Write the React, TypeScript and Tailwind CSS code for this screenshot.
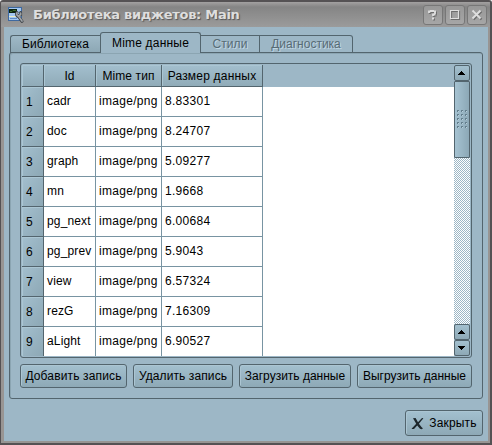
import React from "react";

const rows = [
  ["cadr", "8.83301"],
  ["doc", "8.24707"],
  ["graph", "5.09277"],
  ["mn", "1.9668"],
  ["pg_next", "6.00684"],
  ["pg_prev", "5.9043"],
  ["view", "6.57324"],
  ["rezG", "7.16309"],
  ["aLight", "6.90527"],
];

const raised = "border border-[#53656e] bg-linear-to-b from-[#a3c0cf] to-[#8ea9b6]";

function AppIcon() {
  return (
    <svg width="16" height="16" viewBox="0 0 16 16">
      <rect width="14" height="14" fill="#3f69a0" />
      <rect x="1" y="1" width="12" height="12" fill="#a4c8f2" />
      <rect x="1" y="2" width="8" height="4" fill="#0d2411" />
      <path d="M2 4.5h2l1-1h3" stroke="#3e6b2d" fill="none" />
      <path d="M1 9.5h8" stroke="#e9ecc4" />
      <path d="M2 11.5h7" stroke="#5f8cc4" />
      <path d="M9 5.5c-1 2 0 4 1.8 4.3L14 14.3M12.6 5.5v2.3l-1.6.6" fill="none" stroke="#3b4045" strokeWidth="3" strokeLinecap="round" />
      <path d="M9 5.8c-.6 1.8.2 3.2 1.8 3.6L14 14M12.6 6v1.8l-1.6.8" fill="none" stroke="#9fa4a8" strokeWidth="1.7" strokeLinecap="round" />
    </svg>
  );
}

function TitleButton({ kind }: { kind: "help" | "max" | "close" }) {
  return (
    <button className="flex h-5 w-5 items-center justify-center rounded-[3px] border border-[#777] bg-linear-to-b from-[#989898] to-[#a6a6a6]">
      <svg width="18" height="18" viewBox="0 0 18 18" fill="none">
        {[1, 0].map((o) => (
          <g key={o} transform={`translate(${o} ${o})`} stroke={o ? "#6c6c6c" : "#dedede"} strokeWidth="2">
            {kind === "help" && <path d="M5 7V5.5h1.5M6 5h4M10 5.5h2M11 5v3M11.5 8.5h-3M9 8v2M8 12.5h2" strokeWidth="1.8" />}
            {kind === "max" && <path d="M4.5 4.5h8v8h-8z" strokeWidth="1.2" />}
            {kind === "close" && <path d="M4.5 4.5l8 8M12.5 4.5l-8 8" />}
          </g>
        ))}
      </svg>
    </button>
  );
}

function Arrow({ down = false }: { down?: boolean }) {
  return (
    <button className={`flex h-4 w-4 shrink-0 items-center justify-center rounded-[2px] ${raised}`}>
      <svg width="8" height="4" viewBox="0 0 8 4" shapeRendering="crispEdges">
        <path d={down ? "M0 0h7v1h-1v1h-1v1h-1v1h-1v-1h-1v-1h-1v-1h-1z" : "M3 0h1v1h1v1h1v1h1v1h-7v-1h1v-1h1v-1h1z"} />
      </svg>
    </button>
  );
}

function ScrollBar() {
  return (
    <div className="flex w-4 flex-col">
      <Arrow />
      <div className="flex h-[77px] shrink-0 items-center justify-center rounded-[1px] border border-[#53656e] bg-linear-to-r from-[#a6c3d2] to-[#8ca8b6]">
        <svg width="12" height="20" viewBox="0 0 12 20" shapeRendering="crispEdges">
          {[0, 4, 8, 12, 16].map((y) =>
            [1, 5, 9].map((x) => (
              <g key={`${x}-${y}`}>
                <path d={`M${x} ${y}h2v1h-1v1h-1z`} fill="#65808e" />
                <path d={`M${x + 1} ${y + 1}h1v1h-1z`} fill="#b8d0dc" />
              </g>
            )),
          )}
        </svg>
      </div>
      <svg className="min-h-0 w-4 grow" shapeRendering="crispEdges">
        <defs>
          <pattern id="dither" width="2" height="2" patternUnits="userSpaceOnUse">
            <rect width="2" height="2" fill="#ffffff" />
            <path d="M0 0h1v1h-1zM1 1h1v1h-1z" fill="#9db7c6" />
          </pattern>
        </defs>
        <rect width="100%" height="100%" fill="url(#dither)" />
      </svg>
      <Arrow />
      <Arrow down />
    </div>
  );
}

function HeaderCell({ className, children }: { className: string; children?: React.ReactNode }) {
  return (
    <div className={`flex h-[22px] items-center justify-center border-r border-b border-[#53656e] bg-linear-to-b from-[#a3bfce] to-[#90abb8] shadow-[inset_1px_1px_#abc6d3] ${className}`}>
      {children}
    </div>
  );
}

function PushButton({ className, children }: { className: string; children: React.ReactNode }) {
  return (
    <button className={`flex items-center justify-center rounded-[3px] whitespace-nowrap shadow-[inset_1px_1px_#abc5d2] ${raised} ${className}`}>
      {children}
    </button>
  );
}

export default function App() {
  return (
    <div className="flex h-[445px] w-[492px] flex-col overflow-hidden rounded-t-[3px] border-t-2 border-r-2 border-b-2 border-l border-[#555254] bg-[#989593] font-['Liberation_Sans',sans-serif] text-[12px] leading-[14px] text-black">
      <header className="flex h-[25px] shrink-0 items-center bg-linear-to-b from-[#a3a1a1] via-[#858585] via-20% to-[#9b9b9b] pr-[3px] pl-[7px]">
        <AppIcon />
        <h1 className="ml-[9px] grow font-['DejaVu_Sans',sans-serif] text-[13px] leading-4 font-bold tracking-[-0.28px] whitespace-nowrap text-[#dedede] [text-shadow:1px_1px_1px_#555]">
          Библиотека виджетов: Main
        </h1>
        <div className="flex gap-[2px]">
          <TitleButton kind="help" />
          <TitleButton kind="max" />
          <TitleButton kind="close" />
        </div>
      </header>

      <main className="mr-[2px] mb-[2px] ml-[3px] flex grow flex-col bg-[#9db7c6] pr-[5px] pl-[5px]">
        <nav className="z-10 mt-[5px] -mb-px flex h-[21px] shrink-0 items-end pl-px whitespace-nowrap">
          <div className="flex h-[18px] w-[90px] items-center justify-center rounded-tl-[3px] border border-r-0 border-[#53656e] bg-linear-to-b from-[#9fb9c7] to-[#8da8b5] tracking-[0.2px]">
            <span>Библиотека</span>
          </div>
          <div className="flex h-[21px] w-[101px] items-center justify-center rounded-t-[3px] border border-b-0 border-[#53656e] bg-[#9db7c6] tracking-[0.2px]">
            <span>Mime данные</span>
          </div>
          <div className="flex h-[18px] w-[59px] items-center justify-center border border-l-0 border-[#53656e] tracking-[0.1px] text-[#576b75] [text-shadow:1px_1px_#c1d8e5]">
            <span>Стили</span>
          </div>
          <div className="flex h-[18px] w-[93px] items-center justify-center rounded-tr-[3px] border border-l-0 border-[#53656e] text-[#576b75] [text-shadow:1px_1px_#c1d8e5]">
            <span>Диагностика</span>
          </div>
        </nav>

        <section className="flex h-[347px] w-[474px] shrink-0 flex-col rounded-[3px] border border-[#53656e] px-[10px] pt-[10px] shadow-[inset_1px_1px_#8ba5b2]">
          <div className="flex h-[295px] w-[452px] shrink-0 overflow-hidden rounded-[3px] border border-[#53656e] p-px">
            <div className="flex w-[432px] flex-col overflow-hidden bg-white">
              <div className="flex h-[22px] shrink-0 bg-[#9db7c6]">
                <HeaderCell className="w-[22px]" />
                <HeaderCell className="w-[52px]">Id</HeaderCell>
                <HeaderCell className="w-[66px] tracking-[0.1px]">Mime тип</HeaderCell>
                <HeaderCell className="w-[101px] tracking-[0.2px]">Размер данных</HeaderCell>
              </div>
              {rows.map(([id, size], i) => (
                <div key={id} className="flex h-[30px] shrink-0">
                  <div className="flex w-[22px] items-center border-r border-b border-[#53656e] bg-linear-to-br from-[#a3bfce] to-[#8da8b5] pl-1 shadow-[inset_1px_1px_#abc6d3]">
                    {i + 1}
                  </div>
                  <div className="w-[52px] border-r border-b border-[#7894a2] pt-[7px] pl-[3px] tracking-[0.15px]">{id}</div>
                  <div className="w-[66px] border-r border-b border-[#7894a2] pt-[7px] pl-[3px] tracking-[0.3px]">image/png</div>
                  <div className="w-[101px] border-r border-b border-[#7894a2] pt-[7px] pl-[3px] tracking-[0.3px]">{size}</div>
                </div>
              ))}
            </div>
            <ScrollBar />
          </div>
          <div className="mt-[6px] flex gap-[6px]">
            <PushButton className="h-6 w-[107px] tracking-[0.15px]">Добавить запись</PushButton>
            <PushButton className="h-6 w-[100px] tracking-[0.1px]">Удалить запись</PushButton>
            <PushButton className="h-6 w-[112px]">Загрузить данные</PushButton>
            <PushButton className="h-6 w-[115px]">Выгрузить данные</PushButton>
          </div>
        </section>

        <footer className="mt-[11px] flex justify-end">
          <PushButton className="h-[26px] w-[78px] gap-[5px] tracking-[0.15px]">
            <svg width="13" height="13" viewBox="0 0 13 13">
              <path d="M2 1.2L4.6 1 7 5.2 11 1l1.4.2L7.9 6.8l3 3.8 1.1.6-1.3 1-1.7-.4-2.8-3.4L3 12l-2.4.1.4-.9L5.2 6.7z" fill="#1d272c" />
            </svg>
            <span>Закрыть</span>
          </PushButton>
        </footer>
      </main>
    </div>
  );
}
